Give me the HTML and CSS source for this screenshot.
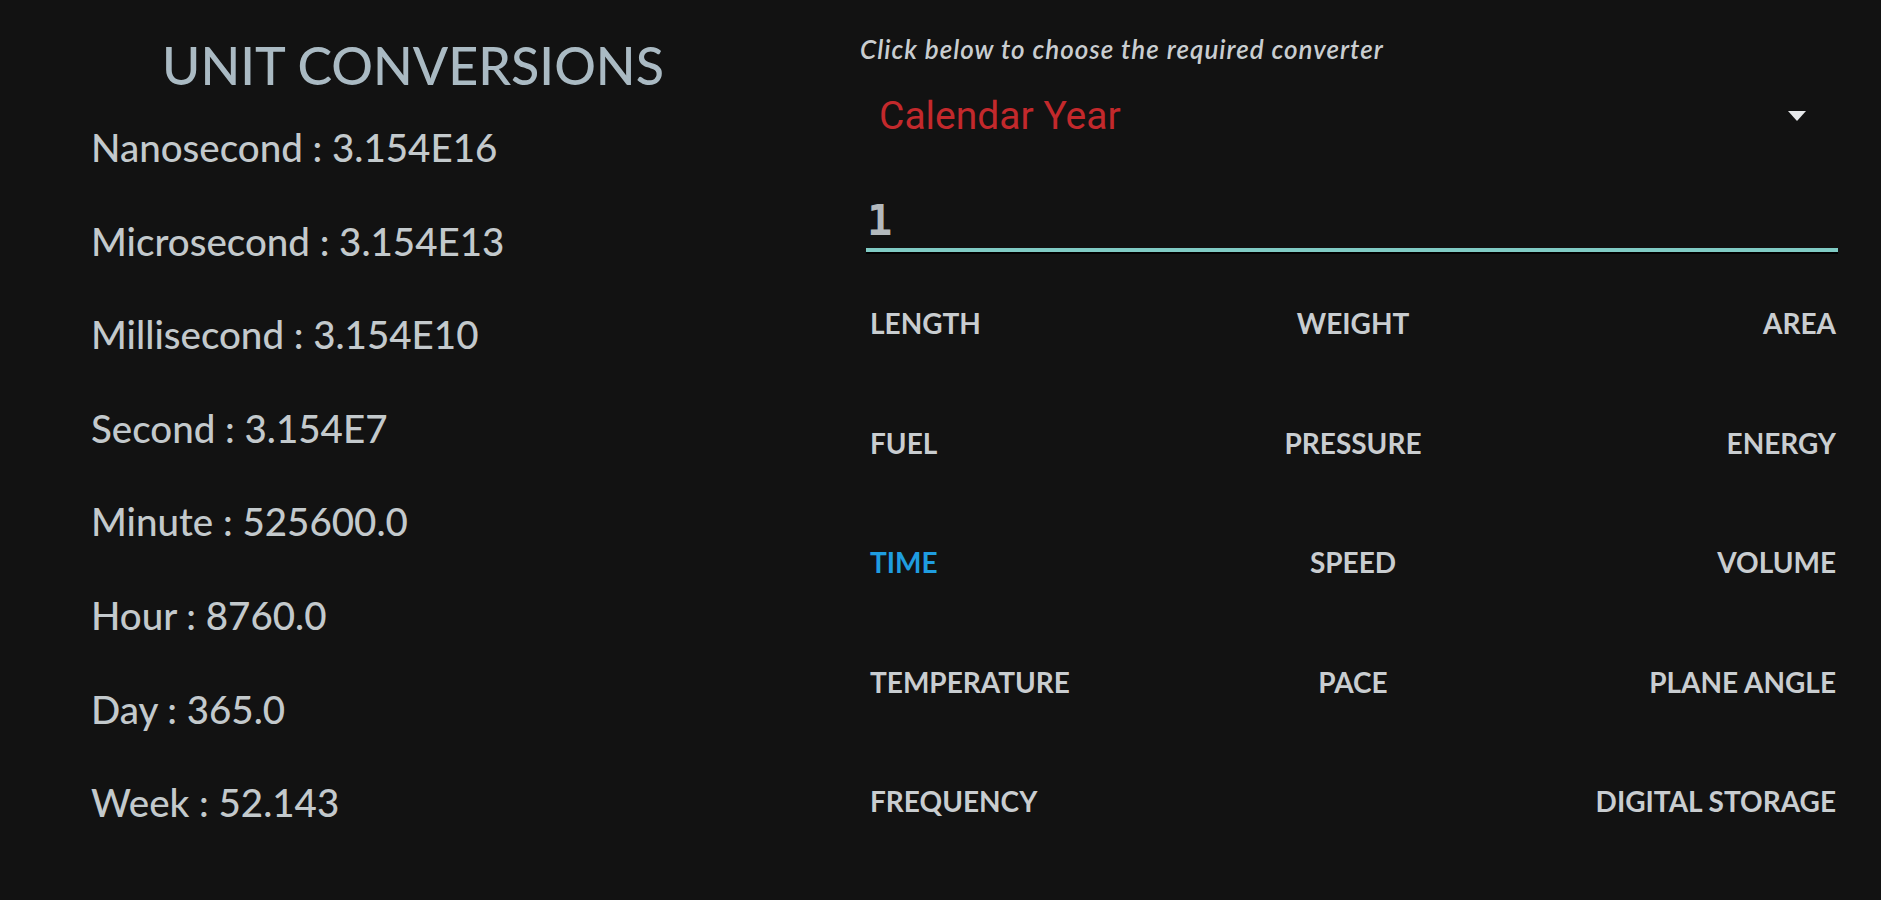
FILE: index.html
```html
<!DOCTYPE html>
<html lang="en">
<head>
<meta charset="utf-8">
<title>Unit Conversions</title>
<link rel="stylesheet" href="styles.css">
</head>
<body>
<div class="page">
  <section class="left">
    <h1 class="title">UNIT CONVERSIONS</h1>
    <ul class="results">
      <li>Nanosecond : 3.154E16</li>
      <li>Microsecond : 3.154E13</li>
      <li>Millisecond : 3.154E10</li>
      <li>Second : 3.154E7</li>
      <li>Minute : 525600.0</li>
      <li>Hour : 8760.0</li>
      <li>Day : 365.0</li>
      <li>Week : 52.143</li>
    </ul>
  </section>
  <section class="right">
    <p class="hint">Click below to choose the required converter</p>
    <div class="select">
      <span class="select-value">Calendar Year</span>
      <svg class="caret" width="20" height="12" viewBox="0 0 20 12"><path d="M1 1 L19 1 L10 11 Z" fill="#e6e8ea"/></svg>
    </div>
    <div class="input">1</div>
    <div class="cats">
      <span class="cat c1">LENGTH</span>
      <span class="cat c2">WEIGHT</span>
      <span class="cat c3">AREA</span>
      <span class="cat c1">FUEL</span>
      <span class="cat c2">PRESSURE</span>
      <span class="cat c3">ENERGY</span>
      <span class="cat c1 active">TIME</span>
      <span class="cat c2">SPEED</span>
      <span class="cat c3">VOLUME</span>
      <span class="cat c1">TEMPERATURE</span>
      <span class="cat c2">PACE</span>
      <span class="cat c3">PLANE ANGLE</span>
      <span class="cat c1">FREQUENCY</span>
      <span class="cat c2"></span>
      <span class="cat c3">DIGITAL STORAGE</span>
    </div>
  </section>
</div>
</body>
</html>
```

FILE: styles.css
```css
html, body {
  margin: 0;
  padding: 0;
  background: #121212;
}
body {
  width: 1881px;
  height: 900px;
  overflow: hidden;
  font-family: Lato, "Open Sans", sans-serif;
}
.page {
  display: flex;
  gap: 40px;
}
.left {
  width: 826px;
  padding-top: 35px;
}
.title {
  margin: 0 0 6px 0;
  text-align: center;
  font-family: Lato, sans-serif;
  font-weight: 500;
  font-size: 52px;
  line-height: 60px;
  color: #aabac3;
}
.results {
  list-style: none;
  margin: 0;
  padding: 0 0 0 91px;
}
.results li {
  font-size: 38.5px;
  font-weight: 500;
  line-height: 93.6px;
  color: #c3c9cc;
}
.right {
  width: 972px;
  padding-top: 34px;
  display: flex;
  flex-direction: column;
}
.hint {
  margin: 0 0 27px -6px;
  font-family: Lato, sans-serif;
  font-style: italic;
  font-weight: 600;
  font-size: 26px;
  line-height: 30px;
  letter-spacing: 1px;
  color: #c9cdd0;
}
.select {
  height: 50px;
  display: flex;
  align-items: center;
  justify-content: space-between;
  padding: 0 31px 0 13px;
}
.select-value {
  font-family: Roboto, "Liberation Sans", sans-serif;
  font-size: 39px;
  line-height: 50px;
  color: #c3292c;
}
.caret {
  display: block;
}
.input {
  margin-top: 56px;
  padding: 0 0 4px 1px;
  font-family: "DejaVu Sans Mono", monospace;
  font-weight: 700;
  font-size: 42px;
  line-height: 47px;
  color: #b3b9bd;
  border-bottom: 4px solid #80cbc4;
  box-shadow: 0 2px 0 0 #000;
}
.cats {
  margin-top: 12px;
  padding: 0 2px 0 4px;
  display: grid;
  grid-template-columns: 1fr 1fr 1fr;
  grid-auto-rows: 119.6px;
  align-items: center;
}
.cat {
  font-family: Lato, sans-serif;
  font-weight: 700;
  font-size: 28px;
  line-height: 119.6px;
  color: #c9cdd0;
}
.c1 { justify-self: start; }
.c2 { justify-self: center; }
.c3 { justify-self: end; }
.cat.active { color: #1f9de0; }
```
